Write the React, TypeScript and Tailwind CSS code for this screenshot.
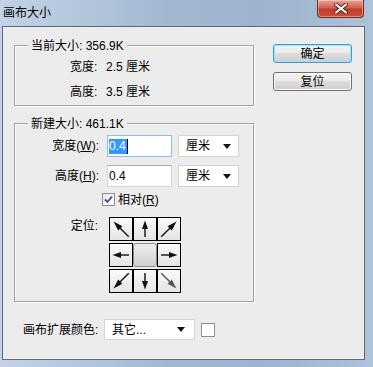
import React from "react"

const FONT = "font-['Liberation_Sans','Noto_Sans_CJK_SC',sans-serif]"

interface GroupProps {
  title: React.ReactNode
  className?: string
  children?: React.ReactNode
}

const GroupBox: React.FC<GroupProps> = ({ title, className, children }) => (
  <div
    className={`relative border border-[#a0a0a0] shadow-[inset_1px_1px_0_#fff,1px_1px_0_#fff] ${className ?? ""}`}
  >
    <span className="absolute left-[13px] top-[-8px] bg-[#ececec] px-[3px] leading-[16px]">
      {title}
    </span>
    {children}
  </div>
)

const Arrow: React.FC<{ angle: number; diag?: boolean; color?: string }> = ({
  angle,
  diag,
  color = "#111",
}) => (
  <svg width="22" height="22" viewBox="0 0 22 22">
    <g transform={`rotate(${angle} 11 11)`}>
      {diag ? (
        <>
          <line x1="11" y1="22" x2="11" y2="7" stroke={color} strokeWidth="1.4" />
          <polygon points="11,0.5 8,10 14,10" fill={color} />
        </>
      ) : (
        <>
          <line x1="11" y1="19" x2="11" y2="8" stroke={color} strokeWidth="1.4" />
          <polygon points="11,2.5 8,11 14,11" fill={color} />
        </>
      )}
    </g>
  </svg>
)

const Cell: React.FC<{ children?: React.ReactNode }> = ({ children }) => (
  <div className="w-[24px] h-[24px] border border-black bg-[linear-gradient(#fafafa,#e4e4e4)] flex items-center justify-center">
    {children}
  </div>
)

const DropArrow = () => (
  <svg width="8" height="5" viewBox="0 0 8 5">
    <polygon points="0,0 8,0 4,5" fill="#111" />
  </svg>
)

const UnitSelect = () => (
  <div className="ml-[6px] w-[61px] h-[22px] bg-white border border-[#d4d4d4] flex items-center pl-[7px] pr-[7px]">
    <span className="leading-[16px]">厘米</span>
    <span className="ml-auto flex">
      <DropArrow />
    </span>
  </div>
)

const Win7Button: React.FC<{ focused?: boolean; children: React.ReactNode }> = ({
  focused,
  children,
}) => (
  <div
    className={`w-[79px] h-[19px] rounded-[3px] border flex items-center justify-center leading-[16px] bg-[linear-gradient(#f2f2f2,#ebebeb_50%,#dddddd_50%,#cfcfcf)] ${
      focused
        ? "border-[#3c9bd8] shadow-[inset_0_0_0_1px_#a6e0f7]"
        : "border-[#707070] shadow-[inset_0_0_0_1px_#fbfbfb]"
    }`}
  >
    {children}
  </div>
)

export default function App() {
  return (
    <div
      className={`${FONT} text-[12px] text-black w-[373px] h-[367px] overflow-hidden flex flex-col bg-[linear-gradient(90deg,#c3d3e5,#a2b8d1_45%,#9db4ce_70%,#aec2d9)]`}
    >
      {/* title bar */}
      <div className="h-[26px] shrink-0 flex items-start">
        <span className="pl-[3px] pt-[5px] leading-[16px] text-[12px]">画布大小</span>
        <div className="ml-auto mr-[9px] w-[47px] h-[18px] rounded-b-[4px] border border-t-0 border-[#7a2a20] bg-[linear-gradient(#e9a699,#d0604f_45%,#c2392a_55%,#c9503c)] shadow-[inset_0_0_0_1px_rgba(255,255,255,0.35)] flex items-center justify-center">
          <svg width="14" height="11" viewBox="0 0 14 11">
            <path d="M2 1.5 L12 9.5 M12 1.5 L2 9.5" stroke="#5a1e18" strokeWidth="4" strokeLinecap="round" />
            <path d="M2 1.5 L12 9.5 M12 1.5 L2 9.5" stroke="#fff" strokeWidth="2.2" strokeLinecap="round" />
          </svg>
        </div>
      </div>

      {/* client area */}
      <div className="ml-[2px] w-[363px] h-[334px] shrink-0 border border-[#5b6b7e] bg-[#ececec] flex pt-[17px] pl-[11px]">
        <div className="w-[240px] flex flex-col">
          <GroupBox title="当前大小: 356.9K" className="mt-[1px] h-[61px]">
            <div className="flex flex-col pt-[13px] pl-[55px] gap-[9px]">
              <div className="flex h-[16px] items-center leading-[16px]">
                <span className="w-[36px]">宽度:</span>
                <span>2.5 厘米</span>
              </div>
              <div className="flex h-[16px] items-center leading-[16px]">
                <span className="w-[36px]">高度:</span>
                <span>3.5 厘米</span>
              </div>
            </div>
          </GroupBox>

          <GroupBox title="新建大小: 461.1K" className="mt-[17px] h-[179px]">
            <div className="flex flex-col pt-[11px]">
              <div className="flex items-center h-[22px]">
                <span className="w-[84px] text-right leading-[16px]">
                  宽度(<u>W</u>):
                </span>
                <div className="ml-[8px] w-[65px] h-[22px] bg-white border border-[#8ebde8] flex items-center pl-[1px]">
                  <span className="bg-[#3399ff] text-white leading-[15px] pr-[1px]">0.4</span>
                  <span className="w-[1px] h-[15px] bg-black" />
                </div>
                <UnitSelect />
              </div>
              <div className="flex items-center h-[22px] mt-[8px]">
                <span className="w-[84px] text-right leading-[16px]">
                  高度(<u>H</u>):
                </span>
                <div className="ml-[8px] w-[65px] h-[22px] bg-white border border-[#d2d5da] border-t-[#abadb3] flex items-center pl-[1px]">
                  <span className="leading-[15px]">0.4</span>
                </div>
                <UnitSelect />
              </div>
              <div className="flex items-center mt-[6px] pl-[87px] h-[13px]">
                <div className="w-[13px] h-[13px] border border-[#8f8f8f] bg-[linear-gradient(135deg,#e6e6e6,#fff)] flex items-center justify-center">
                  <svg width="9" height="9" viewBox="0 0 9 9">
                    <path d="M1 4.5 L3.5 7 L8 1.5" stroke="#3d5288" strokeWidth="1.8" fill="none" />
                  </svg>
                </div>
                <span className="ml-[3px] leading-[16px]">
                  相对(<u>R</u>)
                </span>
              </div>
              <div className="flex mt-[11px]">
                <span className="w-[83px] text-right leading-[16px] pt-[1px]">定位:</span>
                <div className="ml-[11px] flex flex-col gap-[2px]">
                  <div className="flex">
                    <Cell>
                      <Arrow angle={-45} diag />
                    </Cell>
                    <Cell>
                      <Arrow angle={0} />
                    </Cell>
                    <Cell>
                      <Arrow angle={45} diag />
                    </Cell>
                  </div>
                  <div className="flex">
                    <Cell>
                      <Arrow angle={-90} />
                    </Cell>
                    <div className="w-[24px] h-[24px] rounded-[3px] border border-[#8a8a8a] bg-[linear-gradient(#ececec,#d2d2d2)]" />
                    <Cell>
                      <Arrow angle={90} />
                    </Cell>
                  </div>
                  <div className="flex">
                    <Cell>
                      <Arrow angle={-135} diag />
                    </Cell>
                    <Cell>
                      <Arrow angle={180} />
                    </Cell>
                    <Cell>
                      <Arrow angle={135} diag color="#555" />
                    </Cell>
                  </div>
                </div>
              </div>
            </div>
          </GroupBox>

          <div className="flex items-center mt-[17px] pl-[9px]">
            <span className="w-[81px] leading-[16px]">画布扩展颜色:</span>
            <div className="w-[91px] h-[21px] bg-white border border-[#d4d4d4] flex items-center pl-[7px] pr-[9px]">
              <span className="leading-[16px]">其它...</span>
              <span className="ml-auto flex">
                <DropArrow />
              </span>
            </div>
            <div className="ml-[6px] w-[14px] h-[14px] bg-white border border-[#8c8c8c]" />
          </div>
        </div>

        <div className="ml-[19px] flex flex-col gap-[9px]">
          <Win7Button focused>确定</Win7Button>
          <Win7Button>复位</Win7Button>
        </div>
      </div>
    </div>
  )
}
